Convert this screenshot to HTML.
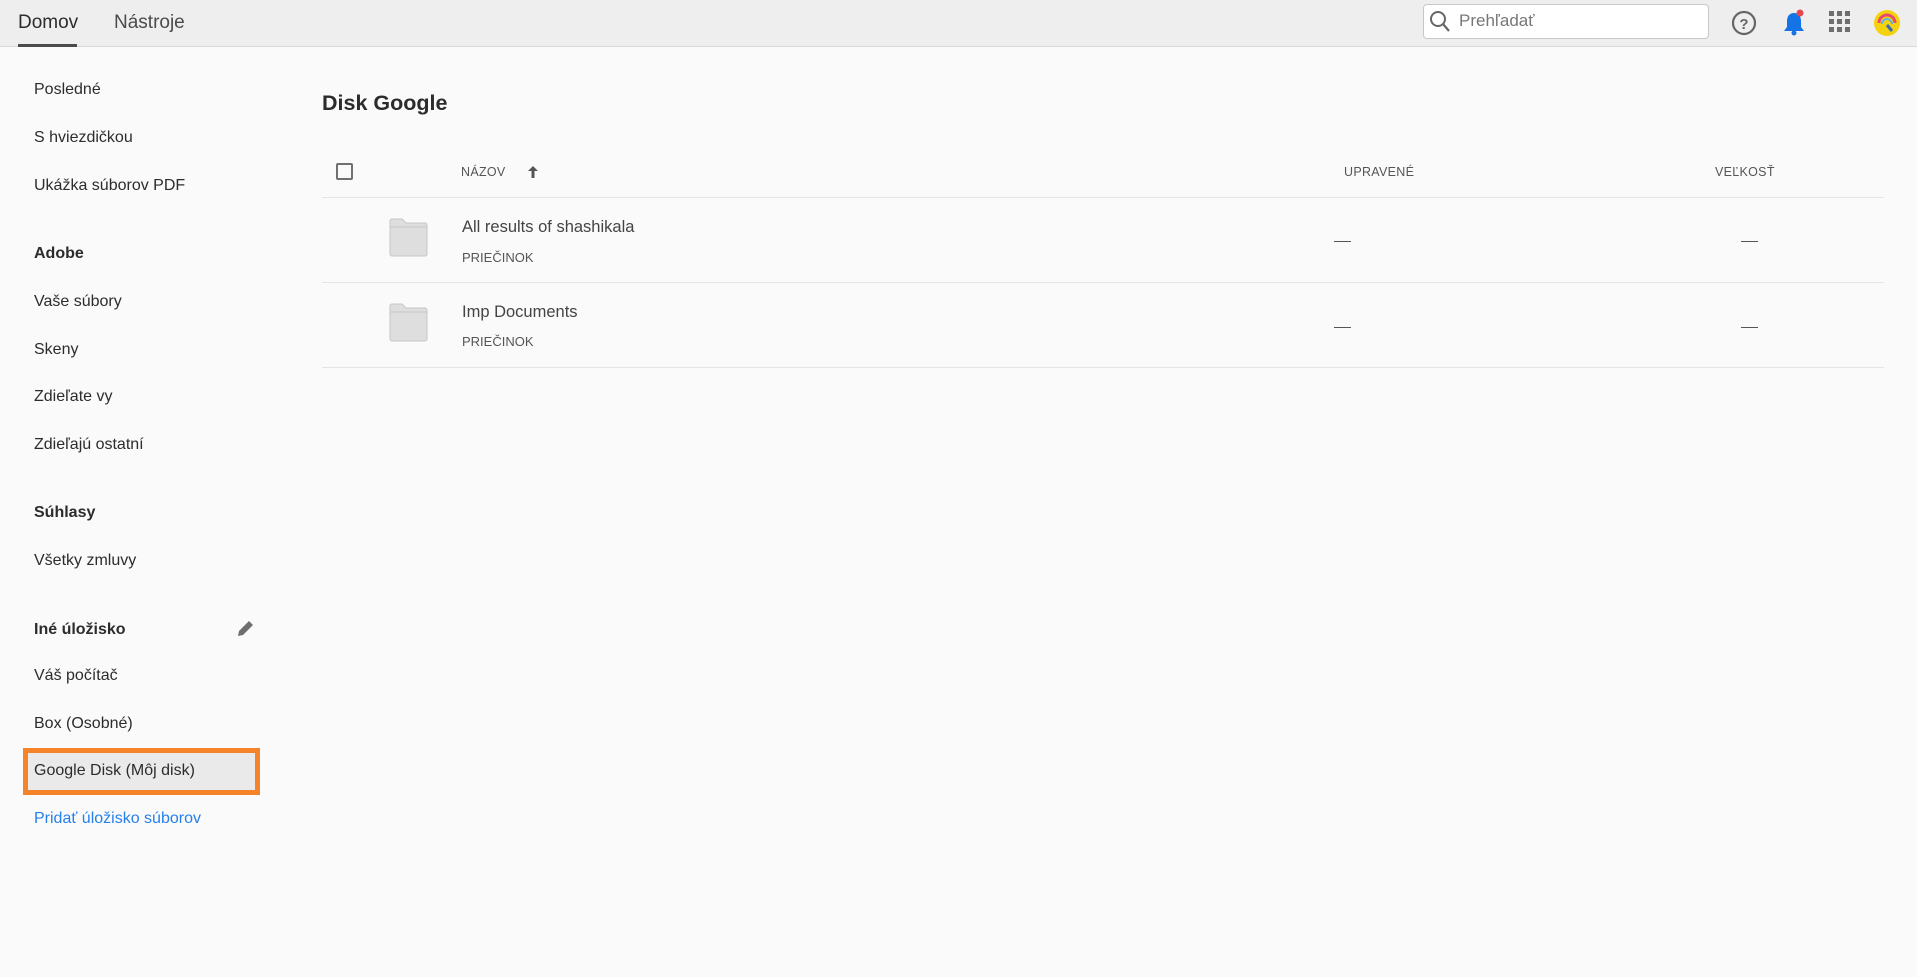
<!DOCTYPE html>
<html><head><meta charset="utf-8"><style>
*{margin:0;padding:0;box-sizing:border-box}
body{width:1917px;height:977px;background:#fafafa;font-family:"Liberation Sans","DejaVu Sans",sans-serif;color:#2c2c2c;position:relative;overflow:hidden}
.a{position:absolute;white-space:nowrap}
.hdr{position:absolute;left:0;top:0;width:1917px;height:47px;background:#eeeeee;border-bottom:1px solid #d8d8d8}
.side{font-size:16px;color:#2c2c2c}
.b{font-weight:bold}
.th{font-size:12.5px;color:#555;letter-spacing:.3px}
.line{position:absolute;left:322px;width:1562px;height:1px;background:#e4e4e4}
.nm{font-size:16.5px;color:#444}
.sub{font-size:13px;color:#555}
.dash{position:absolute;width:17px;height:1px;background:#555}
</style></head><body>
<div class="hdr"></div>
<div class="a" style="left:18px;top:12px;font-size:19px;color:#2c2c2c">Domov</div>
<div class="a" style="left:18px;top:44px;width:59px;height:3px;background:#4b4b4b"></div>
<div class="a" style="left:114px;top:12px;font-size:19px;color:#4b4b4b">Nástroje</div>
<div class="a" style="left:1423px;top:4px;width:286px;height:35px;background:#fff;border:1px solid #c8c8c8;border-radius:4px"></div>
<svg class="a" style="left:1429px;top:10px" width="22" height="24" viewBox="0 0 22 24"><circle cx="9" cy="9" r="7" fill="none" stroke="#666" stroke-width="2"/><path d="M14 14l6 7" stroke="#666" stroke-width="2.2"/></svg>
<div class="a" style="left:1459px;top:11px;font-size:17px;color:#777">Prehľadať</div>
<svg class="a" style="left:1731px;top:10px" width="26" height="26" viewBox="0 0 26 26"><circle cx="13" cy="13" r="11" fill="none" stroke="#666" stroke-width="2.2"/><text x="13" y="19" text-anchor="middle" font-size="15" font-weight="bold" fill="#666" font-family="Liberation Sans">?</text></svg>
<svg class="a" style="left:1782px;top:8px" width="26" height="30" viewBox="0 0 26 30"><path d="M12 5c-5 0-7 4-7 8v6l-3 4h20l-3-4v-6c0-4-2-8-7-8z" fill="#1473e6"/><circle cx="12" cy="25" r="2.5" fill="#1473e6"/><circle cx="18" cy="5" r="3.5" fill="#e34850"/></svg>
<svg class="a" style="left:1829px;top:11px" width="22" height="22" viewBox="0 0 22 22" fill="#6e6e6e"><rect x="0" y="0" width="5" height="5"/><rect x="8" y="0" width="5" height="5"/><rect x="16" y="0" width="5" height="5"/><rect x="0" y="8" width="5" height="5"/><rect x="8" y="8" width="5" height="5"/><rect x="16" y="8" width="5" height="5"/><rect x="0" y="16" width="5" height="5"/><rect x="8" y="16" width="5" height="5"/><rect x="16" y="16" width="5" height="5"/></svg>
<svg class="a" style="left:1873px;top:9px" width="28" height="28" viewBox="0 0 28 28"><circle cx="14" cy="14" r="13" fill="#f5d20e"/><path d="M6 14a8 8 0 0 1 16 0" fill="none" stroke="#e84a6f" stroke-width="3"/><path d="M9 15a5 5 0 0 1 10 0" fill="none" stroke="#5fb3e8" stroke-width="2"/><path d="M14 16l5 6" stroke="#3b6cb5" stroke-width="3"/></svg>

<div class="a side" style="left:34px;top:81px">Posledné</div>
<div class="a side" style="left:34px;top:129px">S hviezdičkou</div>
<div class="a side" style="left:34px;top:177px">Ukážka súborov PDF</div>
<div class="a side b" style="left:34px;top:245px">Adobe</div>
<div class="a side" style="left:34px;top:293px">Vaše súbory</div>
<div class="a side" style="left:34px;top:341px">Skeny</div>
<div class="a side" style="left:34px;top:388px">Zdieľate vy</div>
<div class="a side" style="left:34px;top:436px">Zdieľajú ostatní</div>
<div class="a side b" style="left:34px;top:504px">Súhlasy</div>
<div class="a side" style="left:34px;top:552px">Všetky zmluvy</div>
<div class="a side b" style="left:34px;top:621px">Iné úložisko</div>
<svg class="a" style="left:236px;top:618px" width="20" height="20" viewBox="0 0 20 20"><path d="M2 18l1-5L13 3l4 4L7 17z" fill="#6e6e6e"/></svg>
<div class="a side" style="left:34px;top:667px">Váš počítač</div>
<div class="a side" style="left:34px;top:715px">Box (Osobné)</div>
<div class="a" style="left:23px;top:748px;width:237px;height:47px;border:5px solid #f5832a;background:#eaeaea"></div>
<div class="a side" style="left:34px;top:762px">Google Disk (Môj disk)</div>
<div class="a side" style="left:34px;top:810px;color:#2680eb">Pridať úložisko súborov</div>

<div class="a b" style="left:322px;top:91px;font-size:21.5px;color:#2c2c2c">Disk Google</div>
<div class="a" style="left:336px;top:163px;width:17px;height:17px;border:2px solid #707070;border-radius:2px"></div>
<div class="a th" style="left:461px;top:165px">NÁZOV</div>
<svg class="a" style="left:527px;top:165px" width="12" height="14" viewBox="0 0 12 14"><path d="M6 1L1 6h3.5v7h3V6H11z" fill="#555"/></svg>
<div class="a th" style="left:1344px;top:165px">UPRAVENÉ</div>
<div class="a th" style="left:1715px;top:165px">VEĽKOSŤ</div>
<div class="line" style="top:197px"></div>
<div class="line" style="top:282px"></div>
<div class="line" style="top:367px"></div>

<svg class="a" style="left:389px;top:218px" width="39" height="40" viewBox="0 0 39 40"><path d="M1 3a2 2 0 0 1 2-2h10l4 4h19a2 2 0 0 1 2 2v29a2 2 0 0 1-2 2H3a2 2 0 0 1-2-2z" fill="#dedede" stroke="#c6c6c6"/><path d="M1 9h37" stroke="#c6c6c6"/></svg>
<div class="a nm" style="left:462px;top:218px">All results of shashikala</div>
<div class="a sub" style="left:462px;top:250px">PRIEČINOK</div>
<div class="dash" style="left:1334px;top:241px"></div>
<div class="dash" style="left:1741px;top:241px"></div>

<svg class="a" style="left:389px;top:303px" width="39" height="40" viewBox="0 0 39 40"><path d="M1 3a2 2 0 0 1 2-2h10l4 4h19a2 2 0 0 1 2 2v29a2 2 0 0 1-2 2H3a2 2 0 0 1-2-2z" fill="#dedede" stroke="#c6c6c6"/><path d="M1 9h37" stroke="#c6c6c6"/></svg>
<div class="a nm" style="left:462px;top:303px">Imp Documents</div>
<div class="a sub" style="left:462px;top:334px">PRIEČINOK</div>
<div class="dash" style="left:1334px;top:327px"></div>
<div class="dash" style="left:1741px;top:327px"></div>
</body></html>
